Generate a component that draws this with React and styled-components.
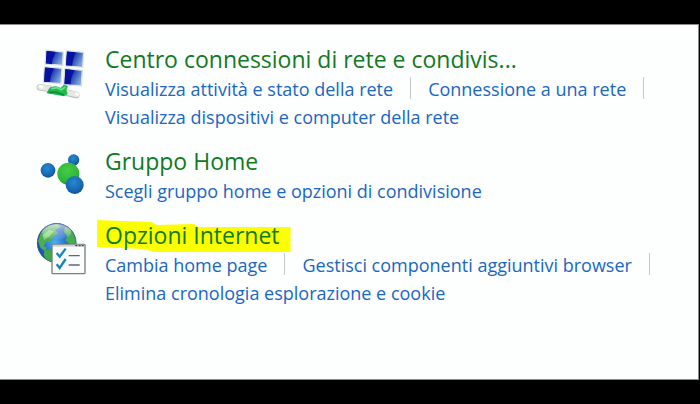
import React from 'react';
import styled, { createGlobalStyle } from 'styled-components';

const GlobalStyle = createGlobalStyle`
  * {
    box-sizing: border-box;
  }

  body {
    margin: 0;
    background: #000000;
    font-family: "Open Sans", "Noto Sans", sans-serif;
  }
`;

const Screen = styled.div`
  display: flex;
  flex-direction: column;
  min-height: 100vh;
  padding: 24px 1px 24px 0;
  background: #000000;
`;

const Panel = styled.main`
  flex: 1;
  padding: 19px 16px 24px 36px;
  background: #fdfefe;
  border: solid #8c8c8c;
  border-width: 1px 1px 1px 0;
`;

const CategoryList = styled.ul`
  display: flex;
  flex-direction: column;
  gap: 15px;
  margin: 0;
  padding: 0;
  list-style: none;
`;

const Category = styled.li`
  display: grid;
  grid-template-columns: 52px minmax(0, 1fr);
  column-gap: 17px;
  align-items: start;
`;

const Icon = styled.svg`
  width: 52px;
  height: 56px;
  margin-top: 2px;
`;

const Title = styled.h2`
  position: relative;
  width: fit-content;
  margin: 0;
  font-size: 23px;
  font-weight: 400;
  line-height: 31px;
  white-space: nowrap;

  a {
    position: relative;
    color: #127a1e;
    text-decoration: none;
  }

  &::before {
    content: "";
    display: ${({ $marked }) => ($marked ? 'block' : 'none')};
    position: absolute;
    inset: 0 -11px -1px -8px;
    background: #fbff00;
    clip-path: polygon(0 0, 28% 2px, 31% 5px, 50% 4px, 52% 7px, 100% 7px, 100% 100%, 30% 100%, 24% 29px, 0 27px);
  }
`;

const Tasks = styled.div`
  display: flex;
  flex-wrap: wrap;
`;

const Task = styled.a`
  color: #1b67be;
  font-size: 18px;
  line-height: 28px;
  text-decoration: none;
  white-space: nowrap;

  &:hover {
    text-decoration: underline;
  }
`;

const Divider = styled.span`
  width: 1px;
  height: 22px;
  margin: 2px 17px 0;
  background: #c6c9cc;
`;

const NetworkIcon = () => (
  <Icon viewBox="18 18 156 168" aria-hidden="true">
    <defs>
      <linearGradient id="screen" x1="0" y1="0" x2="1" y2="0.5">
        <stop offset="0" stopColor="#0a1c98" />
        <stop offset="0.45" stopColor="#0716a0" />
        <stop offset="0.55" stopColor="#2446b4" />
        <stop offset="1" stopColor="#7fa4dc" />
      </linearGradient>
    </defs>
    <g stroke="#dce3e6" strokeWidth="4" fill="url(#screen)">
      <path d="M48 30 100 36 98 76 45 72Z" />
      <path d="M109 32 161 37 158 82 106 78Z" />
      <path d="M43 80 96 85 93 131 40 127Z" />
      <path d="M104 85 157 91 154 138 101 134Z" />
    </g>
    <g fill="#0712a0">
      <path d="M50 33 77 36 68 58 66 73 48 70Z" />
      <path d="M111 35 135 38 129 61 126 77 108 75Z" />
      <path d="M45 83 70 86 63 107 60 126 43 124Z" />
      <path d="M106 88 132 91 124 113 122 133 104 131Z" />
    </g>
    <path d="M30 142 67 148 139 165" fill="none" stroke="#b4bbb7" strokeWidth="20" strokeLinecap="round" />
    <path d="M30 141 67 147 140 164" fill="none" stroke="#e3e8e5" strokeWidth="16" strokeLinecap="round" />
    <path d="M30 139 36 141M140 162 144 163" fill="none" stroke="#fbfcfb" strokeWidth="9" strokeLinecap="round" />
    <path d="M60 142 80 139 92 144 101 134 114 138 109 149 113 162 102 169 50 160 54 151Z" fill="#24b851" />
    <path d="M64 146 82 143 94 149 106 141" fill="none" stroke="#68e38a" strokeWidth="5" />
    <path d="M56 157 77 156 102 165" fill="none" stroke="#0b8e38" strokeWidth="5" />
  </Icon>
);

const HomegroupIcon = () => (
  <Icon viewBox="18 9 156 168" aria-hidden="true">
    <defs>
      <radialGradient id="blueBall" cx="0.45" cy="0.35" r="0.65">
        <stop offset="0" stopColor="#2789d0" />
        <stop offset="0.7" stopColor="#1668b2" />
        <stop offset="1" stopColor="#0e4f96" />
      </radialGradient>
      <radialGradient id="greenBall" cx="0.45" cy="0.35" r="0.65">
        <stop offset="0" stopColor="#45cd48" />
        <stop offset="0.75" stopColor="#2fb837" />
        <stop offset="1" stopColor="#259a31" />
      </radialGradient>
    </defs>
    <circle cx="131" cy="45" r="17" fill="url(#blueBall)" />
    <circle cx="54" cy="76" r="22" fill="url(#blueBall)" />
    <circle cx="115" cy="86" r="33" fill="url(#greenBall)" />
    <circle cx="134" cy="120" r="27" fill="url(#blueBall)" />
  </Icon>
);

const InternetIcon = () => (
  <Icon viewBox="18 21 156 168" aria-hidden="true">
    <defs>
      <radialGradient id="ocean" cx="0.45" cy="0.5" r="0.55">
        <stop offset="0" stopColor="#49b6f2" />
        <stop offset="0.6" stopColor="#2363c8" />
        <stop offset="1" stopColor="#173a86" />
      </radialGradient>
      <linearGradient id="shine" x1="0" y1="0" x2="0" y2="1">
        <stop offset="0" stopColor="#ffffff" stopOpacity="0.7" />
        <stop offset="1" stopColor="#ffffff" stopOpacity="0.05" />
      </linearGradient>
      <clipPath id="globe">
        <circle cx="80" cy="84" r="59" />
      </clipPath>
    </defs>
    <circle cx="80" cy="84" r="59" fill="url(#ocean)" />
    <g clipPath="url(#globe)">
      <path d="M24 78 33 52 55 33 82 25 91 37 76 45 84 55 70 65 63 78 49 81 41 92 50 99 45 107 32 99Z" fill="#4fae52" />
      <path d="M44 105 61 104 74 116 67 146 52 142 41 120Z" fill="#3fa94a" />
      <path d="M105 35 126 45 140 70 139 88 119 88 105 76 113 64 102 52Z" fill="#45ad50" />
      <path d="M37 61 57 45 72 49 57 65 43 74Z" fill="#8bd67c" />
      <ellipse cx="80" cy="50" rx="44" ry="24" fill="url(#shine)" />
    </g>
    <circle cx="80" cy="84" r="58" fill="none" stroke="#31598f" strokeOpacity="0.55" strokeWidth="3" />
    <rect x="66" y="88" width="99" height="88" rx="3" fill="#fbfcfc" stroke="#777f83" strokeWidth="4" />
    <path d="M69 92H162" stroke="#cdd2d4" strokeWidth="6" />
    <path d="M136 92h6M146 92h6M155 92h6" stroke="#444b50" strokeWidth="4" />
    <path d="M80 114 89 125 107 101M80 148 89 159 107 132" fill="none" stroke="#1687b4" strokeWidth="7" />
    <path d="M116 122H149M116 150H149" stroke="#62637f" strokeWidth="4" />
  </Icon>
);

const categories = [
  {
    title: 'Centro connessioni di rete e condivis...',
    icon: NetworkIcon,
    tasks: [
      ['Visualizza attività e stato della rete', 'Connessione a una rete'],
      ['Visualizza dispositivi e computer della rete'],
    ],
  },
  {
    title: 'Gruppo Home',
    icon: HomegroupIcon,
    tasks: [['Scegli gruppo home e opzioni di condivisione']],
  },
  {
    title: 'Opzioni Internet',
    icon: InternetIcon,
    marked: true,
    tasks: [
      ['Cambia home page', 'Gestisci componenti aggiuntivi browser'],
      ['Elimina cronologia esplorazione e cookie'],
    ],
  },
];

const App = () => {
  return (
    <>
      <GlobalStyle />
      <Screen>
        <Panel>
          <CategoryList>
            {categories.map(({ title, icon: CategoryIcon, marked, tasks }) => (
              <Category key={title}>
                <CategoryIcon />
                <div>
                  <Title $marked={marked}>
                    <a href="#">{title}</a>
                  </Title>
                  {tasks.map((line, i) => (
                    <Tasks key={i}>
                      {line.map((task) => (
                        <React.Fragment key={task}>
                          <Task href="#">{task}</Task>
                          {i < tasks.length - 1 && <Divider />}
                        </React.Fragment>
                      ))}
                    </Tasks>
                  ))}
                </div>
              </Category>
            ))}
          </CategoryList>
        </Panel>
      </Screen>
    </>
  );
};

export default App;
